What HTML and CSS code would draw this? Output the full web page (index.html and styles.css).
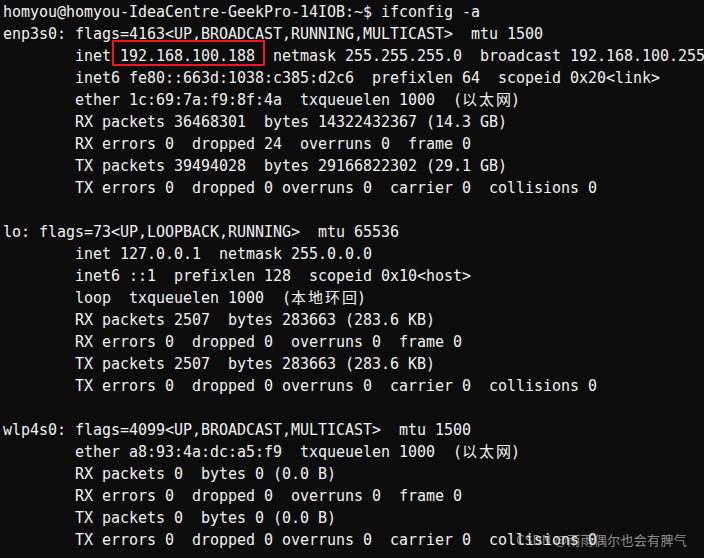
FILE: index.html
```html
<!DOCTYPE html>
<html lang="zh-CN">
<head>
<meta charset="utf-8">
<title>ifconfig -a</title>
<link rel="stylesheet" href="styles.css">
</head>
<body>
<main class="term">
<div class="out">
<div class="ln">homyou@homyou-IdeaCentre-GeekPro-14IOB:~$ ifconfig -a</div>
<div class="ln">enp3s0: flags=4163&lt;UP,BROADCAST,RUNNING,MULTICAST&gt;  mtu 1500</div>
<div class="ln">        inet <span class="hl">192.168.100.188</span>  netmask 255.255.255.0  broadcast 192.168.100.255</div>
<div class="ln">        inet6 fe80::663d:1038:c385:d2c6  prefixlen 64  scopeid 0x20&lt;link&gt;</div>
<div class="ln">        ether 1c:69:7a:f9:8f:4a  txqueuelen 1000  (<span class="cjk">以太网</span>)</div>
<div class="ln">        RX packets 36468301  bytes 14322432367 (14.3 GB)</div>
<div class="ln">        RX errors 0  dropped 24  overruns 0  frame 0</div>
<div class="ln">        TX packets 39494028  bytes 29166822302 (29.1 GB)</div>
<div class="ln">        TX errors 0  dropped 0 overruns 0  carrier 0  collisions 0</div>
<div class="ln"></div>
<div class="ln">lo: flags=73&lt;UP,LOOPBACK,RUNNING&gt;  mtu 65536</div>
<div class="ln">        inet 127.0.0.1  netmask 255.0.0.0</div>
<div class="ln">        inet6 ::1  prefixlen 128  scopeid 0x10&lt;host&gt;</div>
<div class="ln">        loop  txqueuelen 1000  (<span class="cjk">本地环回</span>)</div>
<div class="ln">        RX packets 2507  bytes 283663 (283.6 KB)</div>
<div class="ln">        RX errors 0  dropped 0  overruns 0  frame 0</div>
<div class="ln">        TX packets 2507  bytes 283663 (283.6 KB)</div>
<div class="ln">        TX errors 0  dropped 0 overruns 0  carrier 0  collisions 0</div>
<div class="ln"></div>
<div class="ln">wlp4s0: flags=4099&lt;UP,BROADCAST,MULTICAST&gt;  mtu 1500</div>
<div class="ln">        ether a8:93:4a:dc:a5:f9  txqueuelen 1000  (<span class="cjk">以太网</span>)</div>
<div class="ln">        RX packets 0  bytes 0 (0.0 B)</div>
<div class="ln">        RX errors 0  dropped 0  overruns 0  frame 0</div>
<div class="ln">        TX packets 0  bytes 0 (0.0 B)</div>
<div class="ln">        TX errors 0  dropped 0 overruns 0  carrier 0  collisions 0</div>
</div>
<div class="watermark">CSDN @雨雨偶尔也会有脾气</div>
</main>
</body>
</html>
```
FILE: styles.css
```css
html, body {
  margin: 0;
  padding: 0;
  background: #0c0c0c;
}
.term {
  position: relative;
  width: 704px;
  height: 558px;
  overflow: hidden;
  background: #0c0c0c;
}
.out {
  padding: 1px 0 0 3px;
  font-family: "DejaVu Sans Mono", "Noto Sans CJK SC", monospace;
  font-size: 15px;
  color: #f0f0f0;
  letter-spacing: -0.03px;
}
.ln {
  height: 22px;
  line-height: 22px;
  white-space: pre;
  overflow: visible;
}
.cjk {
  font-family: "Noto Sans CJK SC", sans-serif;
  line-height: 1;
  letter-spacing: 2px;
  margin-right: -2px;
}
.hl {
  position: relative;
}
.hl::after {
  content: "";
  position: absolute;
  left: -8px;
  right: -10px;
  top: -7px;
  bottom: -1px;
  border: 2px solid #f0161c;
  border-radius: 1px;
}
.watermark {
  position: absolute;
  right: 17px;
  bottom: 9px;
  font-family: "Noto Sans CJK SC", "Liberation Sans", sans-serif;
  font-size: 13px;
  line-height: 18px;
  letter-spacing: 0.3px;
  color: rgba(200, 200, 200, 0.7);
}
```
